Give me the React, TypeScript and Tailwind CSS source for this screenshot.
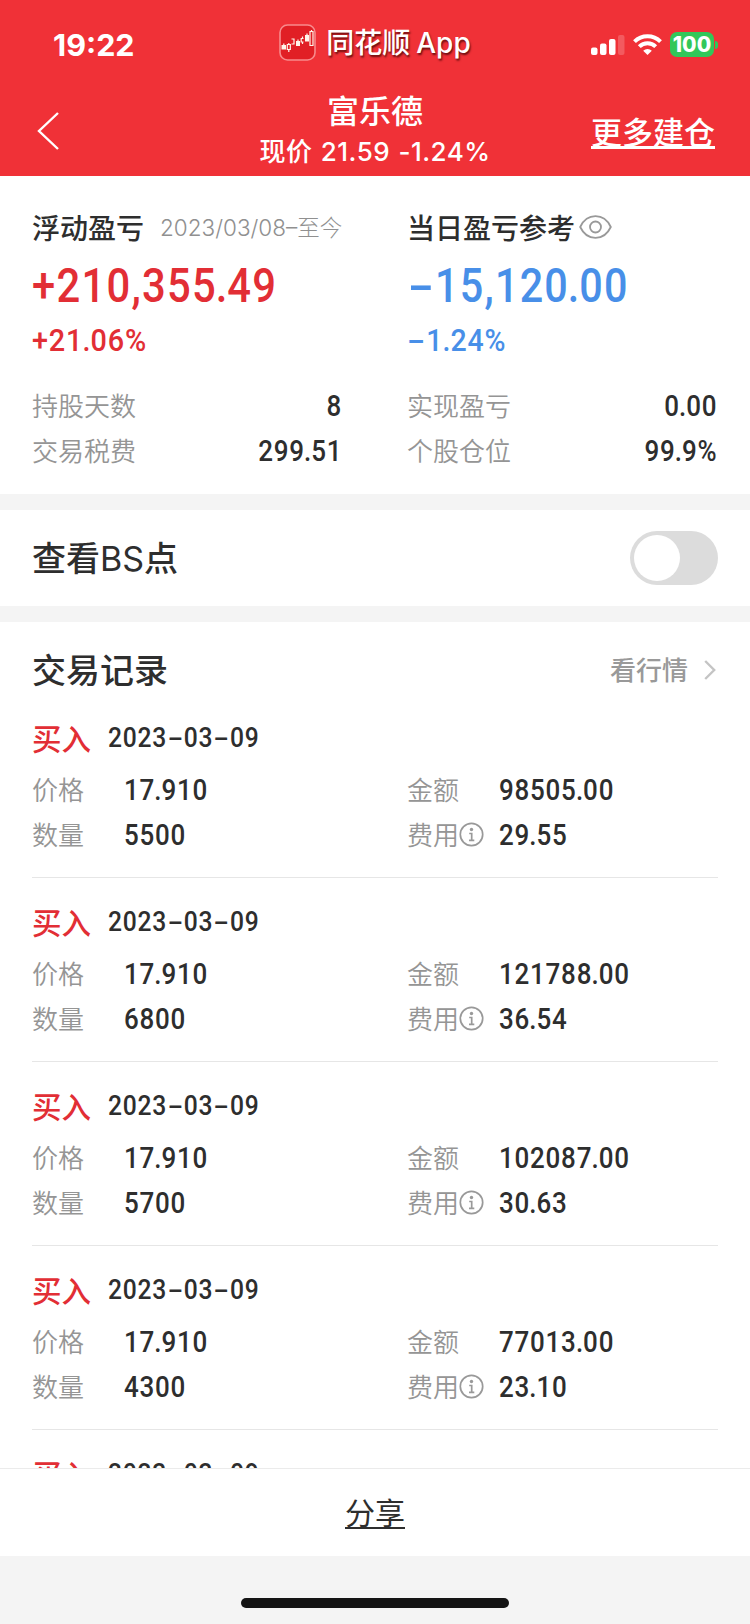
import React from "react";

type Trade = { price: string; amount: string; count: string; fee: string };

const trades: Trade[] = [
  { price: "17.910", amount: "98505.00", count: "5500", fee: "29.55" },
  { price: "17.910", amount: "121788.00", count: "6800", fee: "36.54" },
  { price: "17.910", amount: "102087.00", count: "5700", fee: "30.63" },
  { price: "17.910", amount: "77013.00", count: "4300", fee: "23.10" },
  { price: "17.910", amount: "77013.00", count: "4300", fee: "23.10" },
];

/* Condensed numerals, with wide hyphens and tight decimal points. */
function Num({ children, className = "" }: { children: string; className?: string }) {
  return (
    <span
      className={`inline-block whitespace-nowrap font-['Roboto','Noto_Sans_CJK_SC',sans-serif] font-medium tracking-[0.03em] ${className}`}
    >
      {children.split(/([-.])/).map((part, i) => {
        if (part === "-")
          return (
            <span key={i} className="inline-block w-[0.68em] text-center tracking-normal">
              <span className="inline-block scale-x-[1.85]">-</span>
            </span>
          );
        if (part === ".")
          return (
            <span key={i} className="-mx-[0.03em]">
              .
            </span>
          );
        return part;
      })}
    </span>
  );
}

function StatusBar() {
  return (
    <div className="grid h-[86px] grid-cols-[1fr_auto_1fr] items-center px-[32px]">
      <span className="pt-[4px] pl-[21px] font-['Inter',sans-serif] text-[30.5px] leading-[32px] font-bold">19:22</span>
      <div className="flex items-center gap-[10px] pb-[1px]">
        <svg width="37" height="37" viewBox="0 0 37 37" fill="none">
          <rect x="1" y="1" width="35" height="35" rx="7.5" fill="#e11f25" stroke="#f88a8c" strokeWidth="1.6" />
          <g fill="#fff5ea">
            <rect x="2.5" y="21" width="4.500" height="4.500" />
            <rect x="17" y="17" width="4" height="5" />
            <rect x="26" y="11" width="4" height="6.500" />
          </g>
          <g stroke="#fff5ea" strokeWidth="1.2">
            <path d="M4.800 19.500v2M8.300 20.500h3v5h-3zM9.800 19v1.500M9.800 25.500v2.500M12.500 15h2.500v5h-2.500M19 15.500v2M24.500 14.500h-2.300v3.500h2.300M23.500 12.500v2M23.500 18v2M28 9.500v2M31 7.500h3v14h-3zM32.500 6v1.500" />
          </g>
        </svg>
        <span className="font-['Inter','Noto_Sans_CJK_SC',sans-serif] text-[28px] leading-[34px] font-medium [text-shadow:1px_2px_2px_rgba(60,0,0,0.75)]">
          同花顺<span className="ml-[6px]">App</span>
        </span>
      </div>
      <div className="flex items-center justify-end gap-[8px] pt-[3px]">
        <svg width="34" height="22" viewBox="0 0 34 22" fill="#fff">
          <rect x="0" y="13.500" width="6.500" height="7.500" rx="2" />
          <rect x="9" y="9.500" width="6.500" height="11.500" rx="2" />
          <rect x="18" y="5" width="6.500" height="16" rx="2" />
          <rect x="27" y="1" width="6.500" height="20" rx="2" fillOpacity="0.2" />
        </svg>
        <svg width="29" height="22" viewBox="0 0 29 22" fill="none" stroke="#fff" strokeWidth="4">
          <path d="M1.500 7.600a18.500 18.500 0 0 1 26 0" />
          <path d="M6.300 12.700a11.600 11.600 0 0 1 16.400 0" />
          <path d="M14.500 21l-4.300-4.200a6.200 6.200 0 0 1 8.600 0z" fill="#fff" stroke="none" />
        </svg>
        <div className="flex items-center gap-[1px]">
          <span className="flex h-[25px] w-[44px] items-center justify-center rounded-[7px] bg-[#32c759] font-['Inter',sans-serif] text-[21px] leading-none font-extrabold">
            100
          </span>
          <span className="h-[8px] w-[3px] rounded-r-full bg-[#32c759]" />
        </div>
      </div>
    </div>
  );
}

function TitleBar() {
  return (
    <div className="grid h-[90px] grid-cols-[1fr_auto_1fr] items-center px-[35px]">
      <svg className="ml-[2px]" width="24" height="40" viewBox="0 0 24 40" fill="none" stroke="#fff" strokeWidth="2.400">
        <path d="M21 2L2 20L21 38" />
      </svg>
      <div className="-mt-[3px] flex flex-col items-center">
        <h1 className="text-[32px] leading-[42px] font-medium">富乐德</h1>
        <p className="pt-[3px] font-['Inter','Noto_Sans_CJK_SC',sans-serif] text-[26px] leading-[38px] font-medium tracking-[0.018em] [word-spacing:0.04em]">
          现价 21.59 -1.24%
        </p>
      </div>
      <a className="mt-[2px] justify-self-end border-b-[3px] border-white text-[31px] leading-[31px] font-medium">
        更多建仓
      </a>
    </div>
  );
}

function EyeIcon() {
  return (
    <svg width="33" height="24" viewBox="0 0 33 24" fill="none" stroke="#999" strokeWidth="1.800">
      <path d="M1.200 12C4.500 5 10 1.200 16.500 1.200S28.500 5 31.800 12C28.500 19 23 22.800 16.500 22.800S4.500 19 1.200 12z" />
      <circle cx="16.500" cy="12" r="5.500" />
    </svg>
  );
}

function InfoIcon() {
  return (
    <svg className="mt-[2px]" width="25" height="25" viewBox="0 0 25 25" fill="none" stroke="#999" strokeWidth="1.700">
      <circle cx="12.500" cy="12.500" r="11.200" />
      <circle cx="12.500" cy="7.500" r="1.700" fill="#999" stroke="none" />
      <path d="M10.200 11.500h2.500v6.700M10 18.300h5.300" />
    </svg>
  );
}

function Stat({ label, value }: { label: string; value: string }) {
  return (
    <div className="flex h-[45px] items-center justify-between text-[26px]">
      <span className="pb-[2px] font-[350] text-[#959595]">{label}</span>
      <Num className="origin-right scale-x-[0.865] text-[30px]">{value}</Num>
    </div>
  );
}

function Summary() {
  return (
    <section className="grid h-[318px] grid-cols-[310px_310px] gap-x-[65px] pl-[32px] pt-[29px]">
      <div>
        <div className="flex h-[44px] items-center">
          <h2 className="shrink-0 whitespace-nowrap text-[28px] font-medium">浮动盈亏</h2>
          <span className="ml-[16px] pt-[2px] font-['Inter','Noto_Sans_CJK_SC',sans-serif] text-[22.500px] font-light whitespace-nowrap text-[#909090]">
            2023/03/08–至今
          </span>
        </div>
        <div className="flex h-[74px] items-center text-[48px] text-[#e22e35]">
          <Num className="origin-left scale-x-[0.87]">+210,355.49</Num>
        </div>
        <div className="flex h-[34px] items-center text-[32px] text-[#e22e35]">
          <Num className="origin-left scale-x-[0.9]">+21.06%</Num>
        </div>
        <div className="mt-[26px]">
          <Stat label="持股天数" value="8" />
          <Stat label="交易税费" value="299.51" />
        </div>
      </div>
      <div>
        <div className="flex h-[44px] items-center gap-[4px]">
          <h2 className="text-[28px] font-medium">当日盈亏参考</h2>
          <EyeIcon />
        </div>
        <div className="flex h-[74px] items-center text-[48px] text-[#488fe8]">
          <Num className="origin-left scale-x-[0.86]">-15,120.00</Num>
        </div>
        <div className="flex h-[34px] items-center text-[32px] text-[#488fe8]">
          <Num className="origin-left scale-x-[0.89]">-1.24%</Num>
        </div>
        <div className="mt-[26px]">
          <Stat label="实现盈亏" value="0.00" />
          <Stat label="个股仓位" value="99.9%" />
        </div>
      </div>
    </section>
  );
}

function TradeRow({ trade }: { trade: Trade }) {
  return (
    <article className="h-[184px] shrink-0 border-b border-[#e6e6e6] pt-[22px]">
      <div className="mb-[7px] flex h-[44px] items-center">
        <span className="w-[76px] pb-[2px] text-[29.500px] font-medium text-[#e22e35]">买入</span>
        <Num className="origin-left scale-x-[0.88] text-[28px]">2023-03-09</Num>
      </div>
      {[
        ["价格", trade.price, "金额", trade.amount],
        ["数量", trade.count, "费用", trade.fee],
      ].map(([l1, v1, l2, v2]) => (
        <div key={l1} className="grid h-[45px] grid-cols-[92px_283px_92px_1fr] items-center text-[26px]">
          <span className="pb-[2px] font-[350] text-[#959595]">{l1}</span>
          <Num className="origin-left scale-x-[0.865] text-[30px]">{v1}</Num>
          <span className="flex items-center pb-[2px] font-[350] text-[#959595]">
            {l2}
            {l2 === "费用" && <InfoIcon />}
          </span>
          <Num className="origin-left scale-x-[0.865] text-[30px]">{v2}</Num>
        </div>
      ))}
    </article>
  );
}

export default function App() {
  return (
    <div className="flex h-[1624px] w-[750px] flex-col overflow-hidden bg-[#f4f4f4] font-['Noto_Sans_CJK_SC',sans-serif] text-[#2e2e2e]">
      <header className="h-[176px] shrink-0 bg-[#f03137] text-white">
        <StatusBar />
        <TitleBar />
      </header>
      <main className="flex h-[1292px] shrink-0 flex-col gap-[16px] overflow-hidden">
        <div className="shrink-0 bg-white"><Summary /></div>
        <section className="flex h-[96px] shrink-0 items-center justify-between bg-white px-[32px]">
          <h2 className="pb-[1px] text-[34px] font-medium">
            查看<span className="font-['Inter',sans-serif] font-normal">BS</span>点
          </h2>
          <button role="switch" aria-checked="false" className="flex h-[54px] w-[88px] items-center rounded-full bg-[#dcdcdc] pl-[4px]">
            <span className="size-[46px] rounded-full bg-white" />
          </button>
        </section>
        <section className="flex min-h-0 flex-1 flex-col overflow-hidden bg-white px-[32px]">
          <div className="flex h-[72px] shrink-0 items-center justify-between pt-[21px]">
            <h2 className="text-[34px] font-medium">交易记录</h2>
            <a className="flex items-center gap-[16px] pr-[2px] text-[26px] font-medium text-[#999]">
              看行情
              <svg className="mt-[2px]" width="12" height="20" viewBox="0 0 12 20" fill="none" stroke="#c4c4c4" strokeWidth="2.400">
                <path d="M1.200 1L10.200 10L1.200 19" />
              </svg>
            </a>
          </div>
          {trades.map((t, i) => (
            <TradeRow key={i} trade={t} />
          ))}
        </section>
      </main>
      <footer className="flex h-[88px] shrink-0 items-center justify-center border-t border-[#ebebeb] bg-white">
        <a className="border-b-2 border-[#2e2e2e] text-[30px] leading-[31px]">分享</a>
      </footer>
      <div className="flex flex-1 justify-center pt-[42px]">
        <div className="h-[10px] w-[268px] rounded-full bg-[#141414]" />
      </div>
    </div>
  );
}
